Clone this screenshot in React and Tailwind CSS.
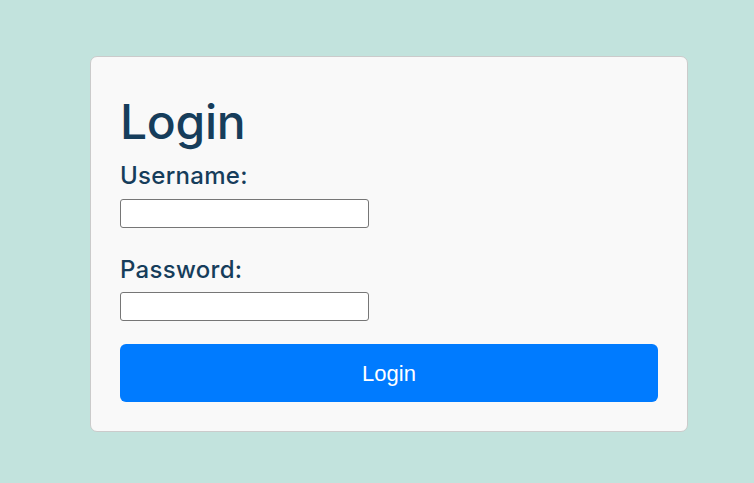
export default function App() {
  return (
    <div className="min-h-[483px] w-full bg-[#c2e3dd] pt-[56px] pb-[50px]" style={{ fontFamily: "Inter, 'Noto Sans', sans-serif" }}>
      <div className="ml-[90px] w-[598px] rounded-[7px] border border-[#cbcbcb] bg-[#f9f9f9] px-[29px] pt-[36px] pb-[29px]">
        <h1 className="text-[48px] leading-[58px] font-medium text-[#163d5b] tracking-[-0.3px]">Login</h1>
        <div className="mt-[10px] text-[24px] leading-[29px] font-medium text-[#163d5b] tracking-[0.3px]">Username:</div>
        <input type="text" className="mt-[9px] block h-[29px] w-[249px] rounded-[3px] border border-[#767676] bg-white" />
        <div className="mt-[27px] text-[24px] leading-[29px] font-medium text-[#163d5b] tracking-[0.3px]">Password:</div>
        <input type="password" className="mt-[8px] block h-[29px] w-[249px] rounded-[3px] border border-[#767676] bg-white" />
        <button className="mt-[23px] flex h-[58px] w-full items-center justify-center rounded-[6px] bg-[#007bff] text-[22px] text-white" style={{ fontFamily: "'Liberation Sans', Arial, sans-serif" }}>
          Login
        </button>
      </div>
    </div>
  );
}
